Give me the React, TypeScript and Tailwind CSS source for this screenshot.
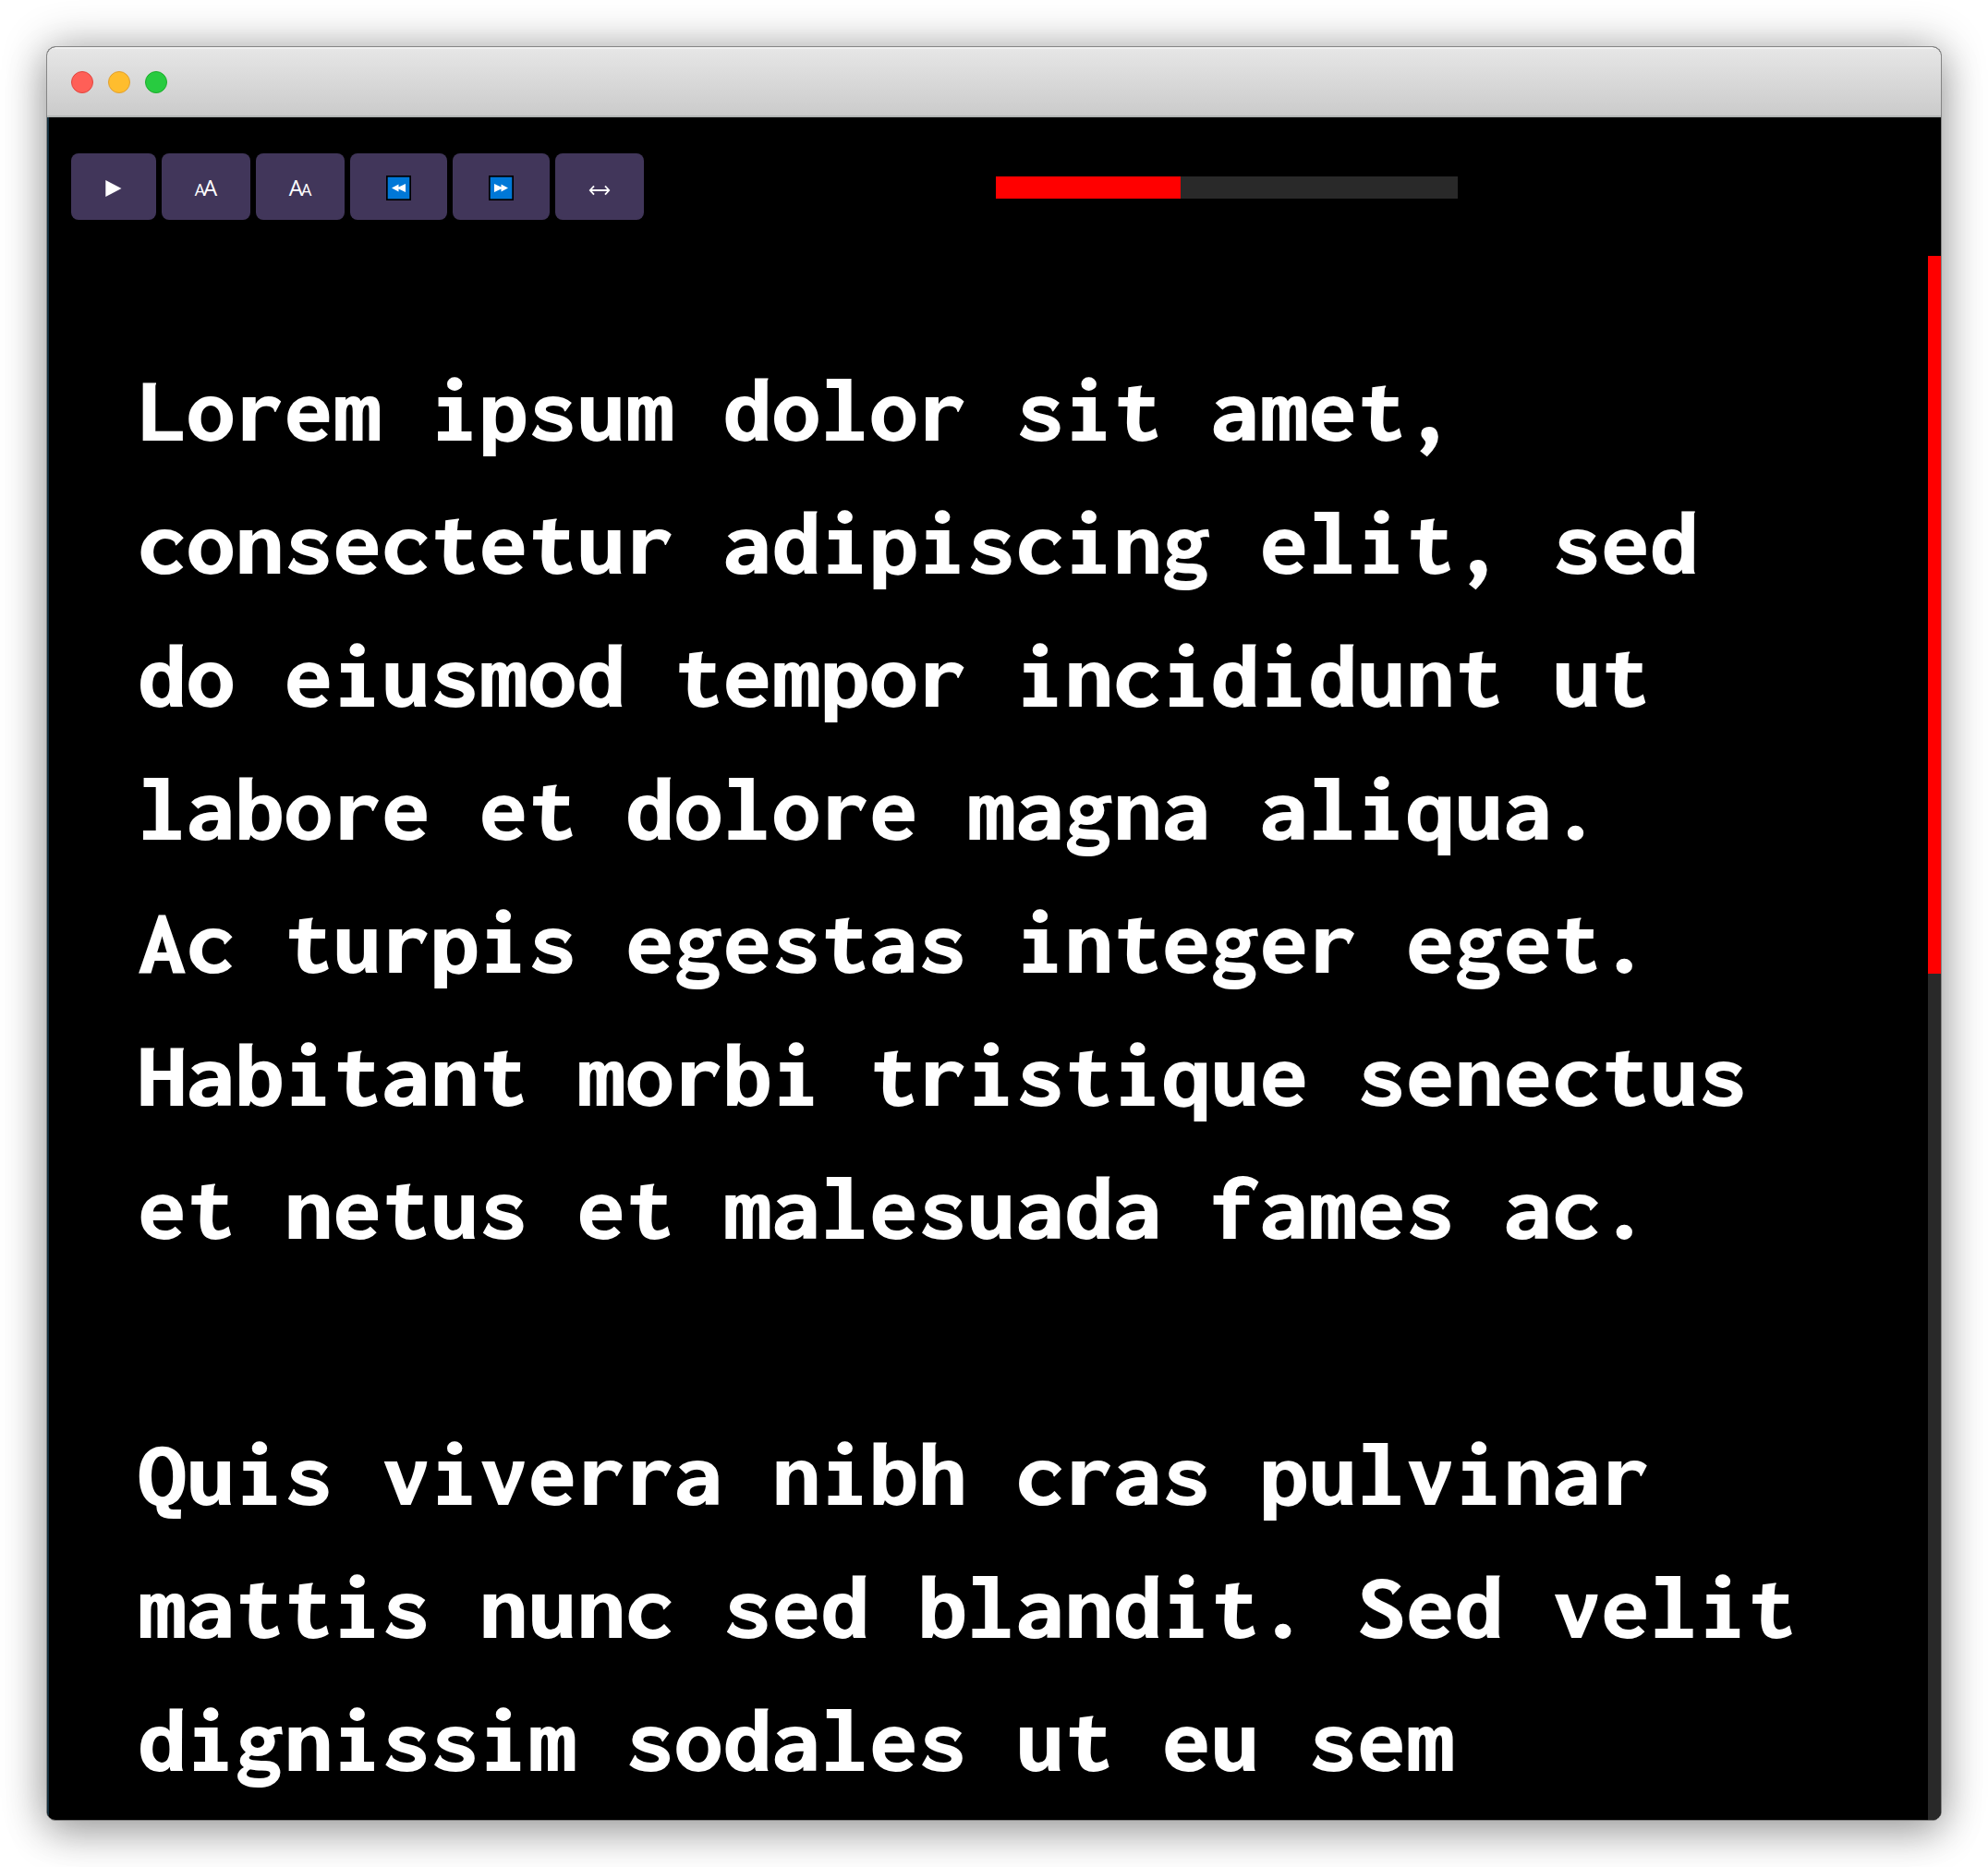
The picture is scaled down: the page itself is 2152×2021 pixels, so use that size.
import React from "react";

const LINES: string[] = [
  "Lorem ipsum dolor sit amet,",
  "consectetur adipiscing elit, sed",
  "do eiusmod tempor incididunt ut",
  "labore et dolore magna aliqua.",
  "Ac turpis egestas integer eget.",
  "Habitant morbi tristique senectus",
  "et netus et malesuada fames ac.",
  "",
  "Quis viverra nibh cras pulvinar",
  "mattis nunc sed blandit. Sed velit",
  "dignissim sodales ut eu sem",
];

const BUTTON = "flex h-[72px] items-center justify-center rounded-lg bg-[#41365a] text-white";

function LetterPair({ sizes }: { sizes: [string, string] }) {
  return (
    <span className="flex items-baseline pt-[3px] font-['Open_Sans',sans-serif] leading-6 font-medium">
      <span className={sizes[0]}>A</span>
      <span className={"-ml-0.5 " + sizes[1]}>A</span>
    </span>
  );
}

function SkipIcon({ forward = false }: { forward?: boolean }) {
  return (
    <svg width="27" height="27" viewBox="0 0 27 27" className={forward ? "mt-[3px] -scale-x-100" : "mt-[3px]"}>
      <rect width="27" height="27" fill="#000" />
      <rect x="1.7" y="1.7" width="23.6" height="23.6" fill="#0078d7" />
      <path d="M6 13.5 13.5 9.4v3.2l7.5-3.6v9l-7.5-3.6v3.2z" fill="#fff" />
    </svg>
  );
}

function Toolbar() {
  return (
    <div className="flex h-[150px] items-center pl-6">
      <div className="flex gap-1.5">
        <button className={BUTTON + " w-[92px]"}>
          <svg width="18" height="18" viewBox="0 0 18 18" className="mt-1">
            <path d="M0.3 0v18L17.5 9z" fill="#fff" />
          </svg>
        </button>
        <button className={BUTTON + " w-24"}>
          <LetterPair sizes={["text-[18px]", "text-[24px]"]} />
        </button>
        <button className={BUTTON + " w-24"}>
          <LetterPair sizes={["text-[24px]", "text-[18px]"]} />
        </button>
        <button className={BUTTON + " w-[105px]"}>
          <SkipIcon />
        </button>
        <button className={BUTTON + " w-[105px]"}>
          <SkipIcon forward />
        </button>
        <button className={BUTTON + " w-24"}>
          <svg width="24" height="12" viewBox="0 0 24 12" className="mt-2" fill="none" stroke="#fff" strokeWidth="1.8">
            <path d="M2 6h20M6 1.4 1.8 6 6 10.6M18 1.4 22.2 6 18 10.6" />
          </svg>
        </button>
      </div>
      <div className="mt-0.5 ml-[381px] h-6 w-[500px] bg-[#292929]">
        <div className="h-full w-2/5 bg-[#ff0000]" />
      </div>
    </div>
  );
}

export default function App() {
  return (
    <div className="h-[2021px] w-[2152px] overflow-hidden bg-white p-[50px]">
      <div className="h-[1921px] w-[2052px] rounded-[10px] shadow-[0_0_48px_rgba(0,0,0,0.3),0_16px_44px_rgba(0,0,0,0.22)]">
        <div className="flex h-full flex-col overflow-hidden rounded-[10px] border border-[#858585] bg-black">
          <div className="flex h-[76px] shrink-0 items-center gap-4 border-t-2 border-b-2 border-t-[#f0f0f0] border-b-[#b2b5b4] bg-linear-to-b from-[#e6e6e6] to-[#cbcbcb] pb-px pl-[26px]">
            <span className="size-6 rounded-full border border-[#e2463f] bg-[#ff5f57]" />
            <span className="size-6 rounded-full border border-[#e0a032] bg-[#ffbd2e]" />
            <span className="size-6 rounded-full border border-[#1dad2b] bg-[#28cb40]" />
          </div>
          <div className="flex min-h-0 flex-1 flex-col border-l-2 border-[#15303f]">
            <Toolbar />
            <div className="flex min-h-0 flex-1">
              <div className="min-w-0 flex-1 overflow-hidden pt-[95px] pl-24">
                <div className="w-[1700px] origin-left scale-x-[1.056] font-['Inconsolata','Noto_Sans_Mono','DejaVu_Sans_Mono',monospace] text-[100px] leading-[144px] font-[760] text-white">
                  {LINES.map((line, i) => (
                    <p key={i} className="h-36 whitespace-pre">
                      {line}
                    </p>
                  ))}
                </div>
              </div>
              <div className="w-3.5 bg-[#292929]">
                <div className="h-[777px] bg-[#ff0000]" />
              </div>
            </div>
          </div>
        </div>
      </div>
    </div>
  );
}
